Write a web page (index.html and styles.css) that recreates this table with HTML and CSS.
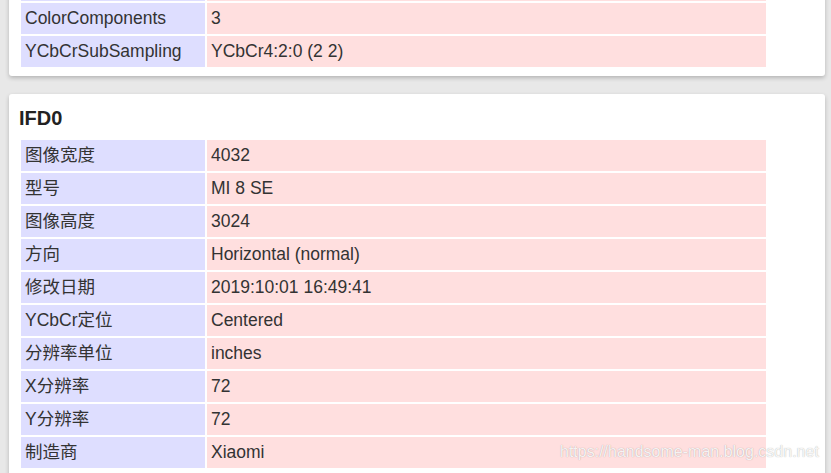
FILE: index.html
```html
<!DOCTYPE html>
<html lang="zh">
<head>
<meta charset="utf-8">
<link rel="stylesheet" href="styles.css">
</head>
<body>
<div class="page">
  <section class="card card-top">
    <table class="exif">
      <tr><td class="k">BitsPerSample</td><td class="v">8</td></tr>
      <tr><td class="k">ColorComponents</td><td class="v">3</td></tr>
      <tr><td class="k">YCbCrSubSampling</td><td class="v">YCbCr4:2:0 (2 2)</td></tr>
    </table>
  </section>
  <section class="card">
    <h3 class="title">IFD0</h3>
    <table class="exif">
      <tr><td class="k">图像宽度</td><td class="v">4032</td></tr>
      <tr><td class="k">型号</td><td class="v">MI 8 SE</td></tr>
      <tr><td class="k">图像高度</td><td class="v">3024</td></tr>
      <tr><td class="k">方向</td><td class="v">Horizontal (normal)</td></tr>
      <tr><td class="k">修改日期</td><td class="v">2019:10:01 16:49:41</td></tr>
      <tr><td class="k">YCbCr定位</td><td class="v">Centered</td></tr>
      <tr><td class="k">分辨率单位</td><td class="v">inches</td></tr>
      <tr><td class="k">X分辨率</td><td class="v">72</td></tr>
      <tr><td class="k">Y分辨率</td><td class="v">72</td></tr>
      <tr><td class="k">制造商</td><td class="v">Xiaomi</td></tr>
    </table>
  </section>
</div>
<div class="watermark">https://handsome-man.blog.csdn.net</div>
</body>
</html>
```
FILE: styles.css
```css
html, body {
  margin: 0;
  padding: 0;
  background: #e8e8e8;
  overflow: hidden;
  height: 473px;
}
body {
  font-family: "Liberation Sans", Arial, "Noto Sans CJK SC", sans-serif;
  color: #333;
  font-size: 17.5px;
}
.page {
  margin-top: -45px;
  padding: 0 6px 0 9px;
  display: flex;
  flex-direction: column;
  gap: 18px;
}
.card {
  background: #fff;
  border-radius: 3px;
  box-shadow: 0 2px 4px rgba(0, 0, 0, 0.22);
  padding: 13px 10px 7px 10px;
}
.title {
  margin: 0 0 9px 0;
  font-size: 20px;
  line-height: 22px;
  font-weight: bold;
  color: #222;
}
.exif {
  border-collapse: separate;
  border-spacing: 2px;
  width: 749px;
  table-layout: fixed;
}
.exif td {
  padding: 4px 4px;
  line-height: 23px;
  height: 23px;
  white-space: nowrap;
}
.exif td.k {
  width: 176px;
  background: #dedeff;
}
.exif td.v {
  background: #ffdfdf;
}
.watermark {
  position: absolute;
  left: 560px;
  top: 443px;
  font-size: 16px;
  font-family: "Liberation Sans", Arial, sans-serif;
  color: rgba(255, 255, 255, 0.9);
  text-shadow: 0 0 1px rgba(0, 0, 0, 0.35);
}
```
